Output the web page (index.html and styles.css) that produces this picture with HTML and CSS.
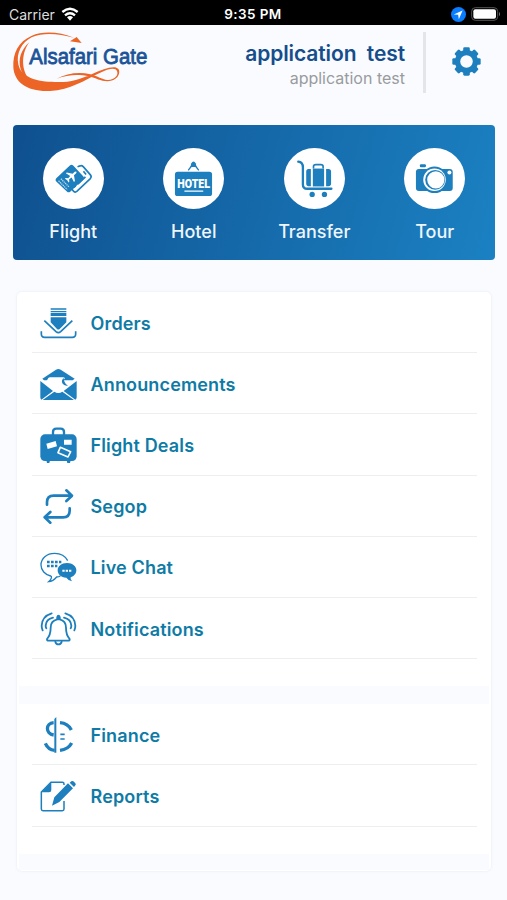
FILE: index.html
```html
<!DOCTYPE html>
<html lang="en">
<head>
    <meta charset="UTF-8">
    <meta name="viewport" content="width=device-width, initial-scale=1.0">
    <title>Alsafari Gate</title>
    <link rel="stylesheet" href="styles.css">
</head>
<body>
    <div class="status-bar">
        <div class="carrier">
            <span>Carrier</span>
            <svg class="wifi" viewBox="0 0 54 42">
                <path d="M4 15 Q27 -5 50 15" fill="none" stroke="#fff" stroke-width="7"/>
                <path d="M12 25 Q27 12 42 25" fill="none" stroke="#fff" stroke-width="7"/>
                <path d="M18 31 Q27 23 36 31 L27 41 Z" fill="#fff"/>
            </svg>
        </div>
        <span class="time">9:35 PM</span>
        <div class="status-right">
            <svg class="location" viewBox="0 0 44 44">
                <circle cx="22" cy="22" r="22" fill="#0a7dff"/>
                <path d="M34 10 L8 22 L21 23 L23 36 Z" fill="#fff"/>
            </svg>
            <svg class="battery" viewBox="0 0 90 42">
                <rect x="2" y="2" width="78" height="38" rx="11" fill="none" stroke="#555" stroke-width="3"/>
                <rect x="7" y="7" width="68" height="28" rx="6" fill="#fff"/>
                <path d="M84 14 Q90 21 84 28 Z" fill="#777"/>
            </svg>
        </div>
    </div>

    <div class="header">
        <svg class="logo" viewBox="30 90 420 189">
            <path d="M222 113 C180 97 132 91 94 108 C55 125 38 160 40 202 C43 248 82 276 150 273 C212 270 252 241 299 219 C326 206 345 202 351 213 C356 225 346 239 323 240 C304 239 291 227 271 223 C237 215 201 220 170 236 C204 223 238 222 267 229 C288 234 301 244 323 244 C350 243 363 222 356 208 C345 193 311 207 278 221 C239 239 206 248 165 246 C111 246 62 232 55 193 C48 160 65 127 95 112 C132 96 175 101 222 113 Z" fill="#ec6426"/>
            <path d="M88 127 C63 149 53 179 62 207 C67 224 76 234 89 240 C65 214 61 164 88 127 Z" fill="#ec6426"/>
            <path d="M230 111 L245 129 L210 124 Z" fill="#ec6426"/>
            <text class="logo-text" x="88" y="191" textLength="354" lengthAdjust="spacingAndGlyphs">Alsafari Gate</text>
        </svg>
        <div class="user">
            <div class="user-name">application&nbsp; test</div>
            <div class="user-company">application test</div>
        </div>
        <svg class="settings" viewBox="-44 -44 88 88">
            <g fill="#1d7fbd">
                <rect x="-10" y="-43" width="20" height="86" rx="4"/>
                <rect x="-10" y="-43" width="20" height="86" rx="4" transform="rotate(45)"/>
                <rect x="-10" y="-43" width="20" height="86" rx="4" transform="rotate(90)"/>
                <rect x="-10" y="-43" width="20" height="86" rx="4" transform="rotate(135)"/>
                <circle r="35"/>
            </g>
            <circle r="19" fill="#f9fbff"/>
        </svg>
    </div>

    <div class="services">
        <div class="service">
            <svg viewBox="128 98 184 184">
                <path d="M234 154 L240 152 Q245 150 250 155 L271 179 Q276 185 270 191 L230 229 Q225 233 220 228 L214 221" fill="none" stroke="#1d7fbd" stroke-width="5" stroke-linecap="round"/>
                <path d="M250 168 L258 178 M256 185 L233 207 M227 212 L221 217" fill="none" stroke="#1d7fbd" stroke-width="5"/>
                <path d="M209 151 Q214 146 219 151 L250 184 Q254 188 249 193 L210 230 Q205 234 200 229 L168 199 Q163 194 168 189 Z" fill="#1d7fbd"/>
                <g transform="translate(215 182) rotate(47)" fill="#fff">
                    <path d="M-3 -15 Q0 -23 3 -15 L3 -6 L18 4 L18 8 L3 4 L2 13 L8 18 L8 21 L0 19 L-8 21 L-8 18 L-2 13 L-3 4 L-18 8 L-18 4 L-3 -6 Z"/>
                </g>
                <path d="M182 191 L207 216 M175 197 L201 223" stroke="#b9d9ed" stroke-width="4" stroke-dasharray="4 2"/>
            </svg>
            <span>Flight</span>
        </div>
        <div class="service">
            <svg viewBox="489 98 184 184">
                <path d="M566 164 L577 150 M596 164 L585 150" stroke="#1d7fbd" stroke-width="4" stroke-linecap="round"/>
                <path d="M572 155 L574 145 Q581 133 588 145 L590 155 Z" fill="#1d7fbd"/>
                <rect x="525" y="170" width="112" height="73" rx="8" fill="#1d7fbd"/>
                <text class="sign" x="532" y="219" textLength="99" lengthAdjust="spacingAndGlyphs">HOTEL</text>
                <path d="M555 228 H609" stroke="#fff" stroke-width="4" stroke-linecap="round"/>
            </svg>
            <span>Hotel</span>
        </div>
        <div class="service">
            <svg viewBox="88 98 184 184">
                <path d="M131 139 C142 140 145 145 145 156 V208 Q145 221 158 221 H231" fill="none" stroke="#1d7fbd" stroke-width="7" stroke-linecap="round"/>
                <path d="M177 160 V154 Q177 148 184 148 H199 Q206 148 206 154 V160" fill="none" stroke="#1d7fbd" stroke-width="5"/>
                <path d="M169 161 V213 H162 Q155 213 155 205 V169 Q155 161 162 161 Z M215 161 H222 Q230 161 230 169 V205 Q230 213 222 213 H215 Z" fill="#1d7fbd"/>
                <rect x="175" y="160" width="34" height="54" fill="#1d7fbd"/>
                <circle cx="173" cy="238" r="8" fill="#1d7fbd"/>
                <circle cx="210" cy="238" r="8" fill="#1d7fbd"/>
            </svg>
            <span>Transfer</span>
        </div>
        <div class="service">
            <svg viewBox="450 98 184 184">
                <rect x="498" y="147" width="18" height="9" rx="3" fill="#1d7fbd"/>
                <rect x="486" y="161" width="111" height="67" rx="9" fill="#1d7fbd"/>
                <circle cx="542" cy="194" r="40" fill="#1d7fbd"/>
                <circle cx="542" cy="194" r="34" fill="#fff"/>
                <circle cx="544" cy="194" r="30" fill="#1d7fbd"/>
                <circle cx="546" cy="194" r="26" fill="#fff"/>
                <circle cx="587" cy="172" r="6" fill="#fff"/>
            </svg>
            <span>Tour</span>
        </div>
    </div>

    <div class="menu">
        <div class="menu-group">
            <div class="menu-item">
                <svg viewBox="87 57 114 114">
                    <path d="M122 72 H169 M122 80 H169" stroke="#1d7fbd" stroke-width="4"/>
                    <path d="M122 84 H169 V93 H122 Z M122 97 H169 V112 L149 132 Q145 135 141 132 L122 112 Z" fill="#1d7fbd"/>
                    <path d="M103 107 L138 140 Q145 146 152 140 L187 107" fill="none" stroke="#1d7fbd" stroke-width="5"/>
                    <path d="M94 139 V147 Q94 157 104 157 H187 Q197 157 197 147 V139" fill="none" stroke="#1d7fbd" stroke-width="5"/>
                </svg>
                <span>Orders</span>
            </div>
            <div class="menu-item">
                <svg viewBox="87 240 114 114">
                    <path d="M97 281 L138 254 Q145 250 152 254 L194 281 L188 286 H102 Z" fill="#1d7fbd"/>
                    <path d="M91 288 L129 318 L94 344 Q91 342 91 337 Z M200 288 V337 Q200 342 196 344 L161 318 Z" fill="#1d7fbd"/>
                    <path d="M98 345 L133 320 Q145 328 157 320 L192 345 Z" fill="#1d7fbd"/>
                    <path d="M115 279 Q117 277 120 277 H160 L165 279 Q158 286 160 294 Q165 302 174 302 L156 319 Q145 326 134 319 L106 294 Z" fill="#fff"/>
                    <path d="M161 279 Q153 286 157 295 Q162 304 174 302 Q163 297 161 279 Z" fill="#1d7fbd"/>
                </svg>
                <span>Announcements</span>
            </div>
            <div class="menu-item">
                <svg viewBox="87 34 114 114">
                    <path d="M129 61 V52 Q129 42 139 42 H152 Q162 42 162 52 V61" fill="none" stroke="#1d7fbd" stroke-width="7"/>
                    <rect x="91" y="59" width="109" height="80" rx="14" fill="#1d7fbd"/>
                    <path d="M109 137 H120 L118 145 H111 Z M170 137 H182 L180 145 H172 Z" fill="#1d7fbd"/>
                    <path d="M109 87 L137 79 L141 95 L113 103 Z M162 75 H185 V90 H162 Z" fill="#fff"/>
                    <path d="M151 98 L182 111 L174 127 L144 114 Z" fill="none" stroke="#fff" stroke-width="5" stroke-linejoin="round"/>
                </svg>
                <span>Flight Deals</span>
            </div>
            <div class="menu-item">
                <svg viewBox="87 219 114 114">
                    <g fill="none" stroke="#1d7fbd" stroke-width="8" stroke-linecap="round" stroke-linejoin="round">
                        <path d="M111 269 V262 Q111 242 131 242 H185 M169 226 L186 242 L169 258"/>
                        <path d="M179 280 V287 Q179 307 159 307 H105 M121 291 L104 307 L121 323"/>
                    </g>
                </svg>
                <span>Segop</span>
            </div>
            <div class="menu-item">
                <svg viewBox="87 42 114 114">
                    <path d="M173 77 C166 63 151 55 134 55 C110 55 93 70 93 90 C93 106 105 119 122 123 C126 124 126 131 116 140 C128 139 135 132 140 126 Q147 126 151 123" fill="none" stroke="#1d7fbd" stroke-width="4"/>
                    <path d="M111 81 H154 M111 93 H142" stroke="#1d7fbd" stroke-width="7" stroke-dasharray="8 4"/>
                    <path d="M171 84 C188 84 199 94 199 106 C199 116 192 124 182 127 Q180 132 186 139 Q175 137 169 128 C153 128 143 118 143 106 C143 94 154 84 171 84 Z" fill="#1d7fbd"/>
                    <path d="M157 107 H185" stroke="#fff" stroke-width="6" stroke-dasharray="7 3"/>
                </svg>
                <span>Live Chat</span>
            </div>
            <div class="menu-item">
                <svg viewBox="87 225 114 114">
                    <g fill="none" stroke="#1d7fbd" stroke-width="5.5" stroke-linecap="round">
                        <path d="M125 235 Q96 244 95 272 Q95 280 98 286 M129 248 Q108 253 107 272 Q107 277 109 280"/>
                        <path d="M166 235 Q195 244 196 272 Q196 280 193 286 M162 248 Q183 253 184 272 Q184 277 182 280"/>
                        <path d="M142 253 Q122 257 122 278 Q122 300 111 312 Q110 317 116 317 H174 Q180 317 179 312 Q168 300 168 278 Q168 257 149 253 Z" stroke-linejoin="round"/>
                        <path d="M136 320 Q138 328 145 328 Q153 328 155 320"/>
                    </g>
                    <path d="M139 253 V246 Q141 239 145 239 Q150 239 152 246 V253 Z" fill="#1d7fbd"/>
                </svg>
                <span>Notifications</span>
            </div>
        </div>
        <div class="menu-group">
            <div class="menu-item">
                <svg viewBox="117 198 114 114">
                    <g fill="none" stroke="#1d7fbd" stroke-width="10">
                        <path d="M161 218 C136 220 136 251 161 255"/>
                        <path d="M136 280 Q144 299 164 301"/>
                        <path d="M180 218 Q204 220 214 240"/>
                        <path d="M180 301 Q205 298 215 279"/>
                    </g>
                    <path d="M163 207 L169 201 V308 H163 Z" fill="#1d7fbd"/>
                    <path d="M181 253 H194 M181 267 H194" stroke="#1d7fbd" stroke-width="5"/>
                </svg>
                <span>Finance</span>
            </div>
            <div class="menu-item">
                <svg viewBox="117 381 114 114">
                    <path d="M192 405 V402 Q192 397 187 397 H153 L124 426 V477 Q124 482 129 482 H187 Q192 482 192 477 V453" fill="none" stroke="#1d7fbd" stroke-width="4.5"/>
                    <path d="M154 397 V420 Q154 427 147 427 H124 Z" fill="#1d7fbd"/>
                    <path d="M204 400 L219 415 L178 456 L156 467 L163 442 Z M209 398 L214 394 Q218 391 222 395 L226 400 Q229 403 226 406 L222 411 Z" fill="#1d7fbd"/>
                </svg>
                <span>Reports</span>
            </div>
        </div>
    </div>
</body>
</html>
```

FILE: styles.css
```css
body {
    font-family: Inter, "Liberation Sans", sans-serif;
    background-color: #f9fbff;
    margin: 0;
    height: 900px;
    overflow: hidden;
}

.status-bar {
    display: grid;
    grid-template-columns: 1fr auto 1fr;
    align-items: center;
    box-sizing: border-box;
    height: 25px;
    padding: 3px 6px 0 9px;
    background-color: #000;
    color: #fff;
    font-size: 13px;
}

.carrier {
    display: flex;
    align-items: center;
    gap: 6px;
    color: #ddd;
    font-size: 14px;
}

.wifi {
    width: 18px;
    height: 14px;
}

.time {
    margin-right: 4px;
    font-size: 13.5px;
    font-weight: 600;
    letter-spacing: 0.4px;
}

.status-right {
    display: flex;
    justify-content: flex-end;
    align-items: center;
    gap: 5px;
}

.location {
    width: 15px;
    height: 15px;
}

.battery {
    width: 30px;
    height: 14px;
}

.header {
    display: flex;
    align-items: flex-start;
    box-sizing: border-box;
    height: 100px;
    padding: 5px 26px 0 10px;
}

.logo {
    width: 140px;
    height: 63px;
    overflow: visible;
}

.logo-text {
    font-family: "Liberation Sans", sans-serif;
    font-size: 66px;
    fill: #1c5499;
    stroke: #1c5499;
    stroke-width: 2.5;
}

.user {
    flex-grow: 1;
    box-sizing: border-box;
    height: 61px;
    margin: 2px 26px 0 0;
    padding: 9px 18px 0 0;
    border-right: 3px solid #e3e5e9;
    text-align: right;
}

.user-name {
    color: #164d8b;
    font-size: 21px;
    line-height: 25px;
    font-weight: 600;
    letter-spacing: -0.1px;
    white-space: nowrap;
}

.user-company {
    color: #9a9b9e;
    font-size: 16px;
    line-height: 24px;
}

.settings {
    width: 29px;
    height: 29px;
    margin-top: 17px;
}

.services {
    display: grid;
    grid-template-columns: repeat(4, 1fr);
    box-sizing: border-box;
    height: 135px;
    margin: 0 12px 0 13px;
    padding-top: 23px;
    border-radius: 4px;
    background: linear-gradient(105deg, #0f508f, #1b81c2);
}

.service {
    display: flex;
    flex-direction: column;
    align-items: center;
    gap: 9px;
    color: #eef6fc;
    font-size: 18px;
    line-height: 27px;
    font-weight: 500;
}

.service svg {
    width: 61px;
    height: 61px;
    border-radius: 50%;
    background-color: #fff;
}

.sign {
    font-family: Roboto, sans-serif;
    font-size: 38px;
    font-weight: 900;
    fill: #fff;
}

.menu {
    box-sizing: border-box;
    height: 579px;
    margin: 32px 16px 0 17px;
    padding: 0 2px;
    border-radius: 5px;
    background-color: #fff;
    box-shadow: 0 0 3px rgba(60, 80, 110, 0.1);
}

.menu-group {
    padding: 0 12px 27px 13px;
    border-bottom: 18px solid #f9fbff;
}

.menu-group:last-child {
    border-bottom-width: 16px;
}

.menu-item {
    display: flex;
    align-items: center;
    gap: 13.5px;
    box-sizing: border-box;
    height: 61.2px;
    padding-left: 7px;
    padding-top: 2px;
    border-bottom: 1px solid #eceef0;
    color: #0e7ba6;
    font-size: 18px;
    font-weight: 600;
    letter-spacing: 0.15px;
}

.menu-item svg {
    width: 38px;
    height: 38px;
}
```
